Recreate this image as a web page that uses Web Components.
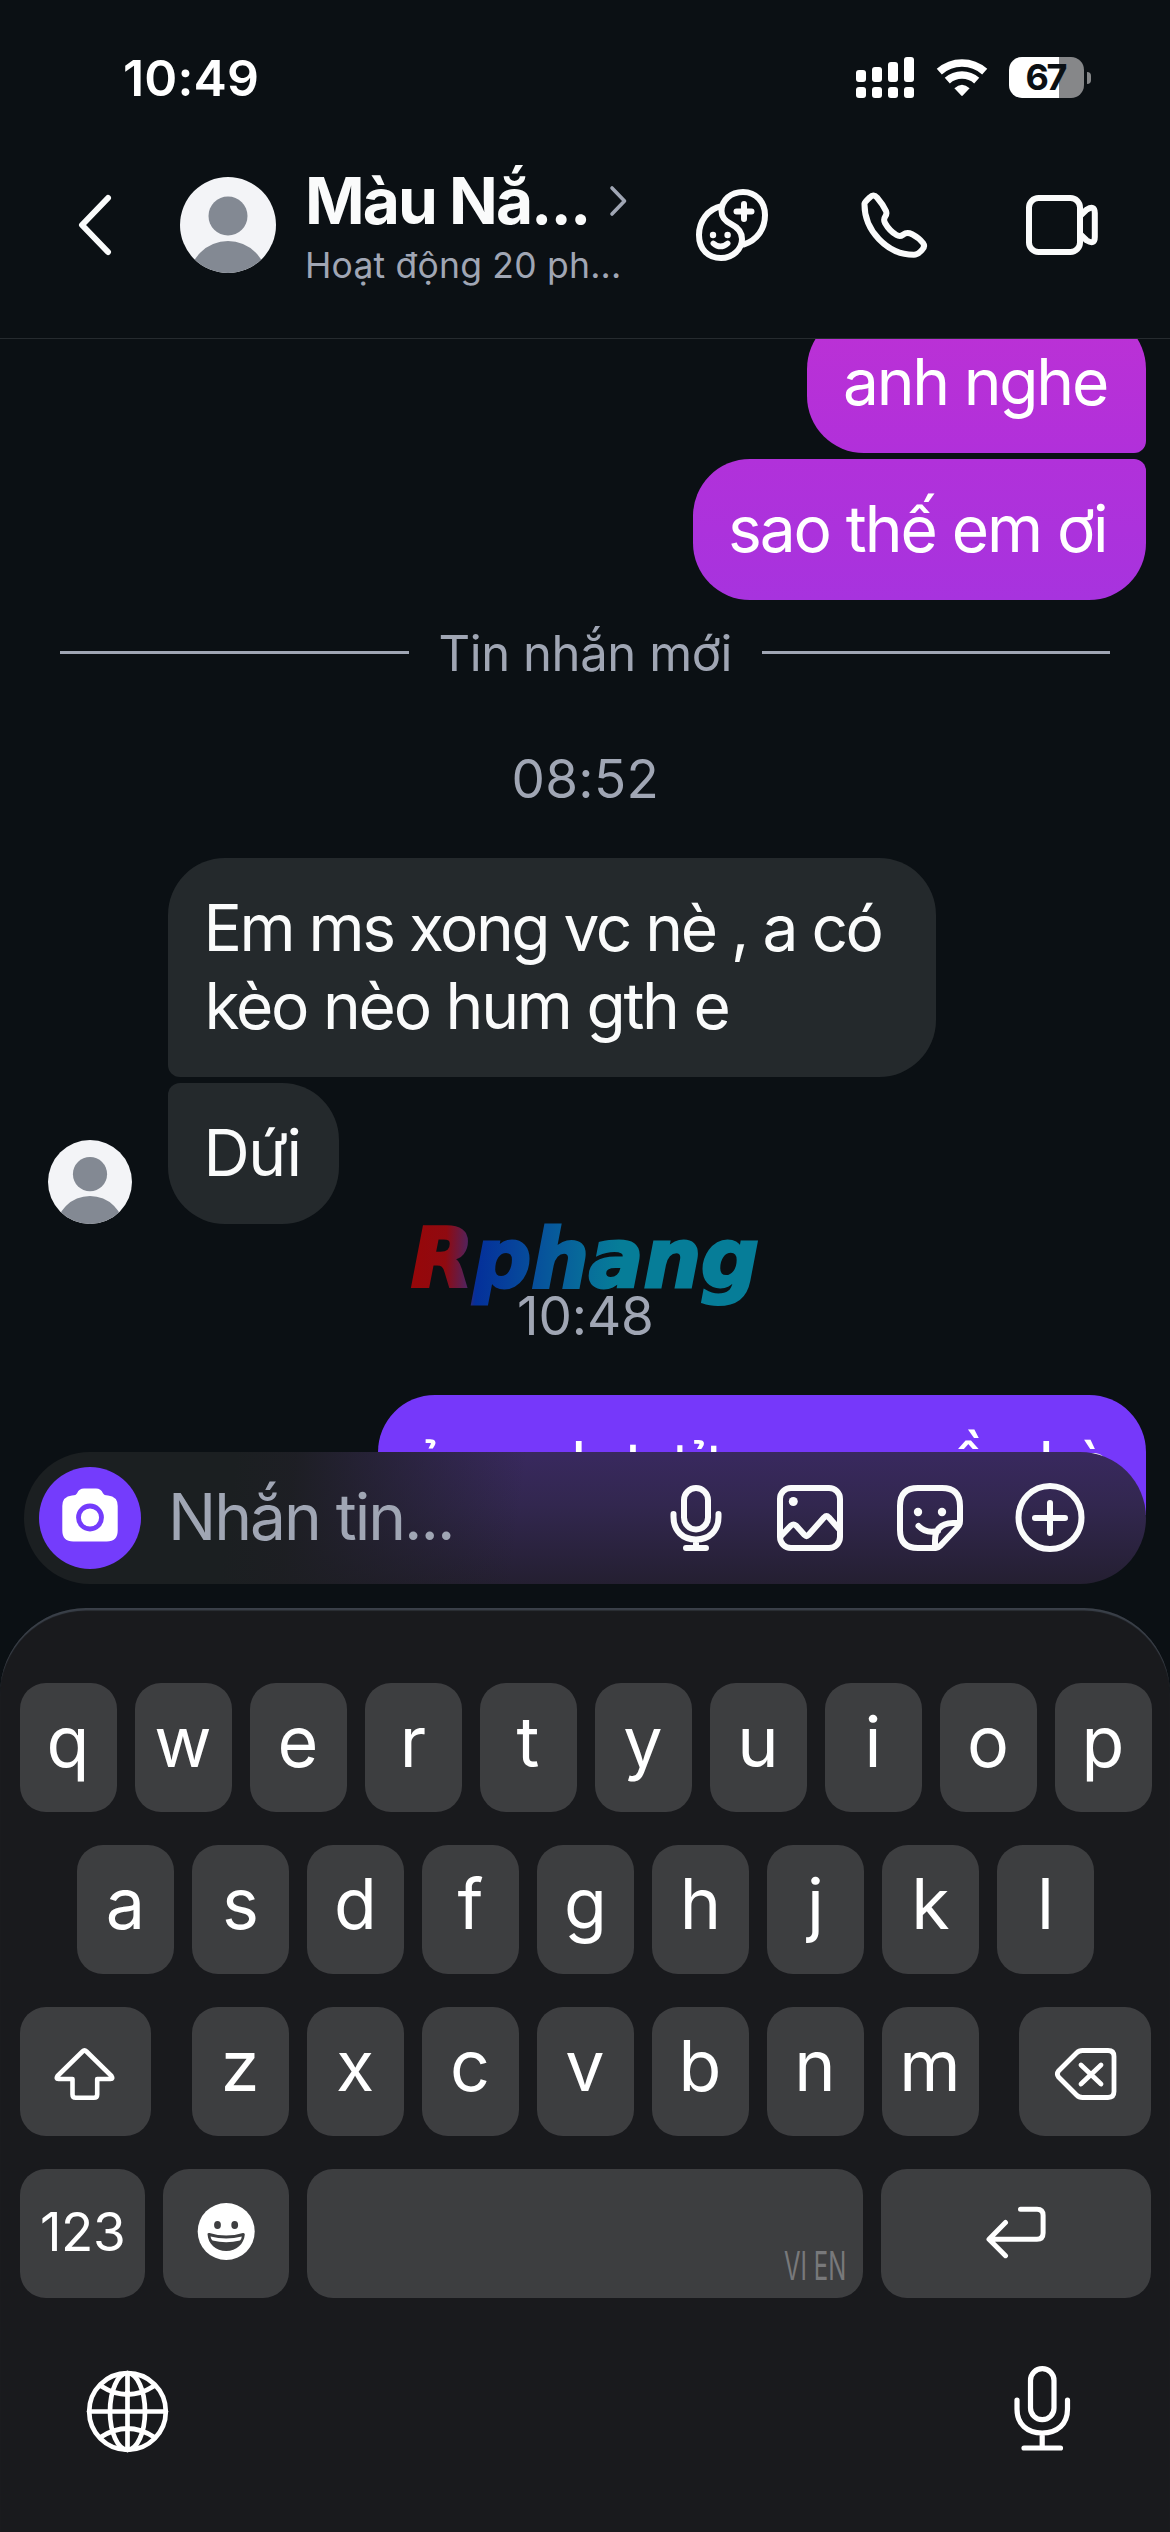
<!DOCTYPE html>
<html lang="vi">
<head>
<meta charset="utf-8">
<title>Màu Nắng</title>
<style>
html,body{margin:0;background:#0b1014}
body{font-family:Inter,"Noto Sans",sans-serif;color:#fafbfb}
</style>
</head>
<body>
<chat-app></chat-app>
<script>
const ICONS = {
  signal: ['856 57 58 41', '<g fill="#fff"><rect x="856" y="70" width="10" height="12" rx="3"/><rect x="872" y="67" width="10" height="15" rx="3"/><rect x="888" y="62" width="10" height="20" rx="3"/><rect x="904" y="57" width="10" height="25" rx="3"/><rect x="856" y="87" width="10" height="11" rx="3"/><rect x="872" y="87" width="10" height="11" rx="3"/><rect x="888" y="87" width="10" height="11" rx="3"/><rect x="904" y="87" width="10" height="11" rx="3"/></g>'],
  wifi: ['936 57 52 41', '<g fill="none" stroke="#fff" stroke-width="7.6"><path d="M939.3 71.7A34 34 0 0 1 984.7 71.7"/><path d="M947.3 80.7A22 22 0 0 1 976.7 80.7"/></g><path d="M954.4 88.3Q962 81 969.6 88.3L962.8 95.6Q962 96.4 961.2 95.6Z" fill="#fff"/>'],
  back: ['70 190 50 70', '<path d="M108 198L82 225L108 252" stroke-width="6"/>'],
  more: ['606 182 26 38', '<path d="M612 188L624.500 201L612 214" stroke="#a0a6b4" stroke-width="3.6"/>'],
  avatar: ['180 177 96 96', '<defs><clipPath id="c"><circle cx="228" cy="225" r="48"/></clipPath></defs><g clip-path="url(#c)" stroke="none"><rect x="180" y="177" width="96" height="96" fill="#f3f4f7"/><circle cx="228" cy="216" r="19.500" fill="#838993"/><circle cx="228" cy="280" r="39" fill="#838993"/></g>'],
  theme: ['696 189 72 72', '<path d="M722 206C707 209 699 222 699 235C699 249 708 258 721 258C733 258 742 249 742 239C742 232 738 227.500 731 224C725 221 721.500 217 721.500 211C721.500 200 731 192 743 192C756 192 765 202 765 215C765 229 757 240.500 743.500 244.500M744 204V219M736.500 211.500H751.500" stroke-width="6"/><path d="M713.300 243.300Q720.500 249.500 727.700 243.300" stroke-width="5.500"/><circle cx="713" cy="235" r="3.200" class="f"/><circle cx="727.600" cy="235" r="3.200" class="f"/>'],
  phone: ['858 189 72 72', '<path d="M864.500 203.500Q864.800 202 870 197.200Q873.300 193.500 877 197.500Q883 204.500 886 211Q887.200 214 885 217Q883.300 219.500 885 223Q889.500 231 896.500 235Q899.800 237 903 234.700Q907 231.700 912 234.200Q919 238 923 243Q925.500 246.500 922 250Q917.500 254.800 914 254.800C887 255 864 230 864.500 203.500Z" stroke-width="6"/>'],
  video: ['1026 189 72 72', '<rect x="1029" y="198" width="51" height="54" rx="9.500" stroke-width="6"/><path d="M1081 215L1086.500 209.800Q1094.800 204.500 1094.800 213V237Q1094.800 245.500 1086.500 240.200L1081 235" stroke-width="6"/>'],
  camera: ['39 1467 102 102', '<path class="f" stroke="none" d="M72 1495.500Q76 1495.500 77.200 1493Q79 1488.500 84 1488.500H96Q101 1488.500 102.800 1493Q104 1495.500 108 1495.500Q117.700 1496.500 117.700 1506V1530.500Q117.700 1541.500 106.700 1541.500H73.300Q62.300 1541.500 62.300 1530.500V1506Q62.300 1496.500 72 1495.500Z"/><circle cx="90" cy="1517.500" r="11.500" stroke="#743cfc" stroke-width="4.800"/>'],
  mic: ['660 1482 72 72', '<g stroke-width="6"><rect x="684" y="1488" width="24" height="41.500" rx="12"/><path d="M673.500 1514V1517C673.500 1531 683 1539.500 696 1539.500S718.500 1531 718.500 1517V1514M696 1540V1547M686 1548H706"/></g>'],
  image: ['774 1482 72 72', '<g stroke-width="6"><rect x="780" y="1488" width="60" height="60" rx="11"/><path d="M781 1536L791 1525.500Q793.500 1523.500 796 1525.500L804.500 1535Q806.500 1537 808.500 1535L824 1517.500Q826.500 1515 829 1517.500L839 1529"/></g><circle cx="793.300" cy="1501.500" r="4.500" class="f"/>'],
  sticker: ['894 1482 72 72', '<g stroke-width="6"><path d="M936 1548H918Q900 1548 900 1530V1506Q900 1488 918 1488H942Q960 1488 960 1506V1521Q960 1525 957 1528L940 1546Q938 1548 936 1548ZM958 1523H953Q935 1523.500 935 1541V1547M918.500 1526Q926 1534 938 1531"/></g><circle cx="918" cy="1512" r="4.200" class="f"/><circle cx="942" cy="1512" r="4.200" class="f"/>'],
  plus: ['1014 1482 72 72', '<g stroke-width="6"><circle cx="1050" cy="1517.500" r="31.500"/><path d="M1050 1503V1533M1035 1518H1065"/></g>'],
  shift: ['51.500 2043 68 60', '<path stroke-width="4.600" d="M82 2050.500Q84 2048.500 86 2050.500L111 2075Q113 2078 110 2078H96.700V2093.500Q96.700 2096.800 93.400 2096.800H75.300Q72 2096.800 72 2093.500V2078H58Q55 2078 57 2075Z"/>'],
  del: ['1050 2043 70 60', '<path stroke-width="4.800" d="M1082.500 2049.500H1108Q1114 2049.500 1114 2055.500V2090.500Q1114 2096.500 1108 2096.500H1082.500Q1079 2096.500 1076.500 2094L1058.500 2076Q1056.200 2073 1058.500 2070L1076.500 2052Q1079 2049.500 1082.500 2049.500ZM1081 2064L1101 2083M1101 2064L1081 2083"/>'],
  emoji: ['196.500 2202 60 60', '<circle cx="226.700" cy="2231.500" r="28.500" class="f"/><ellipse cx="218" cy="2225" rx="3.400" ry="4" fill="#3d3e40" stroke="none"/><ellipse cx="235.200" cy="2225" rx="3.400" ry="4" fill="#3d3e40" stroke="none"/><path d="M208 2234Q208 2232.800 210 2233Q226.500 2238 243.500 2233Q245.300 2232.800 245.300 2234.500C244.500 2244 237 2251 226.700 2251S208.500 2244 208 2234Z" fill="#3d3e40" stroke="none"/><path d="M211 2236.500Q226.700 2240.500 242.300 2236.500Q242 2239.500 240.500 2240.500Q226.700 2244 213 2240.500Q211.500 2239.500 211 2236.500Z" class="f"/>'],
  ret: ['983.500 2202 66 60', '<path stroke-width="5" d="M1021 2209.300H1037.500Q1043.600 2209.300 1043.600 2215.500V2233Q1043.600 2239.200 1037.500 2239.200H990M1006 2222.500L989.500 2239.200L1006 2255.700"/>'],
  globe: ['85 2369 86 86', '<g stroke-width="4.700"><circle cx="127.500" cy="2411.500" r="38.300"/><ellipse cx="127.500" cy="2411.500" rx="17.500" ry="38.300"/><path d="M127.500 2373V2450M89 2411.500H166M101 2386Q127.500 2403 154 2386M101 2437Q127.500 2420 154 2437"/></g>'],
  dictate: ['1010 2363 64 90', '<g stroke-width="5.200"><rect x="1030.500" y="2368.700" width="23.500" height="51" rx="11.700"/><path d="M1017 2400V2409C1017 2424 1027 2433 1042.200 2433S1067.500 2424 1067.500 2409V2400M1042.200 2433V2447M1024 2448H1060.500"/></g>']
};

class UiIcon extends HTMLElement {
  connectedCallback() {
    const [vb, body] = ICONS[this.getAttribute('name')];
    const [, , w, h] = vb.split(' ');
    const s = +(this.getAttribute('size') || w);
    this.attachShadow({mode: 'open'}).innerHTML =
      `<style>:host{display:block;flex:none;width:${s}px;height:${s * h / w}px}svg{display:block;width:100%;height:100%;fill:none;stroke:currentColor;stroke-linecap:round;stroke-linejoin:round}g[fill="#fff"]{stroke:none}.f{fill:currentColor;stroke:none}:host([name=wifi]) svg{stroke:none;stroke-linecap:butt}</style>
       <svg viewBox="${vb}">${body}</svg>`;
  }
}

/* One line of text, tracked so that its ink spans exactly "w" pixels. */
class FitText extends HTMLElement {
  connectedCallback() {
    const root = this.attachShadow({mode: 'open'});
    const w = +this.getAttribute('w');
    root.innerHTML = `<style>:host{display:block;flex:none;white-space:pre;width:${w}px}span{display:inline-block}</style><span><slot></slot></span>`;
    const cs = getComputedStyle(this);
    const ctx = document.createElement('canvas').getContext('2d');
    ctx.font = `${cs.fontWeight} ${cs.fontSize} ${cs.fontFamily}`;
    const text = this.textContent;
    const m = ctx.measureText(text);
    const ink = m.actualBoundingBoxLeft + m.actualBoundingBoxRight;
    const span = root.querySelector('span');
    span.style.letterSpacing = (w - ink) / ([...text].length - 1) + 'px';
    span.style.marginLeft = m.actualBoundingBoxLeft + 'px';
  }
}

const define = (name, html) => customElements.define(name, class extends HTMLElement {
  constructor() {
    super();
    const t = document.createElement('template');
    t.innerHTML = html;
    this.attachShadow({mode: 'open'}).append(t.content.cloneNode(true));
  }
});

define('status-bar', `<style>
:host{display:flex;height:155px;box-sizing:border-box;padding:0 79px 0 125px;align-items:center;color:#fff}
.time{font-size:50px;font-weight:600;line-height:60px;margin-right:auto;padding-top:1px}
.bat{position:relative;display:flex;align-items:center;justify-content:center;width:75px;height:41px;border-radius:13px;background:linear-gradient(90deg,#fff 50px,#868789 50px);color:#0b1014;font-size:36px;font-weight:700;line-height:41px;margin-left:21.5px}
.nub{width:4px;height:12px;border-radius:0 6px 6px 0;background:#868789;margin-left:3px}
ui-icon[name=wifi]{margin-left:22px}
</style>
<fit-text class="time" w="132">10:49</fit-text><ui-icon name="signal"></ui-icon><ui-icon name="wifi"></ui-icon>
<div class="bat"><fit-text w="40">67</fit-text></div><div class="nub"></div>`);

define('chat-header', `<style>
:host{display:flex;height:184px;box-sizing:border-box;border-bottom:1px solid #262b2f;align-items:flex-start;padding:0 72px 0 70px}
ui-icon[name=back]{margin-top:35px}
ui-icon[name=avatar]{margin:22px 0 0 60px}
.who{display:flex;flex-direction:column;margin-left:33px;width:387px}
.name{display:flex;gap:19px;height:80px;padding-top:6px}
.name fit-text{font-size:64px;font-weight:700;line-height:80px}
.name ui-icon{margin-top:21px}
.sub{font-size:35.500px;line-height:44px;color:#a0a6b4;margin:2.500px 0 0 -1px}
.acts{display:flex;margin-top:34px}
.acts ui-icon[name=phone]{margin:0 96px 0 90px}
</style>
<ui-icon name="back"></ui-icon><ui-icon name="avatar"></ui-icon>
<div class="who"><div class="name"><fit-text w="278">Màu Nắ...</fit-text><ui-icon name="more"></ui-icon></div>
<fit-text class="sub" w="311">Hoạt động 20 ph...</fit-text></div>
<div class="acts"><ui-icon name="theme"></ui-icon><ui-icon name="phone"></ui-icon><ui-icon name="video"></ui-icon></div>`);

define('chat-bubble', `<style>
:host{display:block;box-sizing:border-box;flex:none;width:var(--w);padding:31px 0 32px 40.500px;font-size:64px;line-height:78px;background:#24292c;border-radius:57px;color:#fafbfb}
:host([out]){padding-left:38px;color:#fff;align-self:flex-end;margin-right:24px;background:linear-gradient(var(--a),var(--b))}
:host([first]){border-bottom-left-radius:12px}
:host([last]){border-top-left-radius:12px}
:host([out][first]){border-bottom-left-radius:57px;border-bottom-right-radius:12px}
:host([out][last]){border-top-left-radius:57px;border-top-right-radius:12px}
</style><slot></slot>`);

define('new-divider', `<style>
:host{display:flex;align-items:center;gap:32px;height:59px;padding:0 60px;margin-top:23px;color:#a0a6b4;font-size:49px;line-height:57px}
i{flex:1;height:3px;background:#a0a6b4}
fit-text{padding-top:2px}
</style><i></i><fit-text w="289">Tin nhắn mới</fit-text><i></i>`);

define('time-stamp', `<style>
:host{display:flex;justify-content:center;height:64px;font-size:53px;line-height:64px;color:#a0a6b4}
</style><slot></slot>`);

define('brand-mark', `<style>
:host{position:absolute;left:395px;top:870px;width:380px;height:110px}
svg{display:block;overflow:visible}
text{font:italic 700 82px "DejaVu Sans",sans-serif}
</style><svg width="380" height="110" viewBox="395 1209 380 110"><defs>
<linearGradient id="g" gradientUnits="userSpaceOnUse" x1="411" y1="1250" x2="759" y2="1265">
<stop offset="0" stop-color="#970709"/><stop offset=".1" stop-color="#900a10"/><stop offset=".165" stop-color="#50235f"/><stop offset=".19" stop-color="#04309a"/><stop offset=".28" stop-color="#06409b"/><stop offset=".39" stop-color="#07569b"/><stop offset=".52" stop-color="#07709a"/><stop offset=".6" stop-color="#067d98"/><stop offset="1" stop-color="#067d98"/></linearGradient></defs>
<text x="411" y="1286.500" textLength="348" lengthAdjust="spacingAndGlyphs" fill="url(#g)" stroke="url(#g)" stroke-width="3">Rphang</text></svg>`);

define('chat-thread', `<style>
:host{position:relative;display:flex;flex-direction:column;height:1176px;overflow:hidden}
.in{display:flex;align-items:flex-end;margin:47px 0 60px;padding-left:48px;gap:36px}
.col{display:flex;flex-direction:column;gap:6px}
</style>
<chat-bubble out first style="--w:339px;--a:#bc31d5;--b:#b130da;margin-top:-27px"><fit-text w="262">anh nghe</fit-text></chat-bubble>
<chat-bubble out last style="--w:453px;--a:#b131da;--b:#a733de;margin-top:6px"><fit-text w="374">sao thế em ơi</fit-text></chat-bubble>
<new-divider></new-divider>
<time-stamp style="margin-top:65px"><fit-text w="141">08:52</fit-text></time-stamp>
<div class="in"><ui-icon name="avatar" size="84"></ui-icon><div class="col">
<chat-bubble first style="--w:768px"><fit-text w="673">Em ms xong vc nè , a có</fit-text><fit-text w="520">kèo nèo hum gth e</fit-text></chat-bubble>
<chat-bubble last style="--w:171px"><fit-text w="90">Dứi</fit-text></chat-bubble></div></div>
<time-stamp><fit-text w="132">10:48</fit-text></time-stamp>
<chat-bubble out style="--w:768px;--a:#7638fa;--b:#7638fa;height:219px;margin-top:47px"><fit-text w="690">ủa anh tưởng em về nhà</fit-text></chat-bubble>
<brand-mark></brand-mark>`);

define('message-composer', `<style>
:host{position:relative;z-index:1;display:flex;align-items:center;box-sizing:border-box;height:132px;margin:-63px 24px 24px;padding:0 60px 0 15px;border-radius:66px;background:linear-gradient(97deg,#1b1f21 0,#1b1f21 210px,#1c1e21f0 270px,#1d1e2400 500px),linear-gradient(#39295f,#32274f 40%,#241f31)}
.cam{width:102px;height:102px;border-radius:50%;background:#743cfc;color:#fff}
.ph{font-size:64px;line-height:78px;color:#a0a6b4;margin:-2px auto 0 32px}
.acts{display:flex}
ui-icon+ui-icon{margin-left:42px}
ui-icon[name=sticker],ui-icon[name=plus]{margin-left:48px}
</style>
<div class="cam"><ui-icon name="camera"></ui-icon></div><fit-text class="ph" w="278">Nhắn tin...</fit-text>
<div class="acts"><ui-icon name="mic"></ui-icon><ui-icon name="image"></ui-icon><ui-icon name="sticker"></ui-icon><ui-icon name="plus"></ui-icon></div>`);

define('key-cap', `<style>
:host{display:flex;flex:none;align-items:center;justify-content:center;box-sizing:border-box;width:var(--w,97px);height:129px;padding-bottom:12px;border-radius:26px;background:#3d3e40;color:#fff;font-size:70px;line-height:80px}
:host([fn]){padding-bottom:4px;font-size:53px;line-height:64px}
:host([mid]){padding-bottom:0;padding-top:4px}
:host([lang]){justify-content:flex-end;align-items:flex-end;padding:0 17px 8px 0;font-size:40px;line-height:48px;color:#78797b}
</style><slot></slot>`);

const keys = s => [...s].map(c => `<key-cap>${c}</key-cap>`).join('');
define('key-board', `<style>
:host{display:flex;flex-direction:column;box-sizing:border-box;height:924px;padding:75px 19px 0 20px;border-radius:86px 86px 0 0;background:#191a1d;box-shadow:inset 0 3px 1px -0.500px #3a4049;color:#fff}
.row{display:flex;justify-content:center;gap:18px;margin-bottom:33px}
.row.s{justify-content:space-between}
.mid{display:flex;gap:18px}
.foot{display:flex;justify-content:space-between;padding:32px 77px 0 65px}
.foot ui-icon[name=globe]{margin-top:6px}
.lang{display:block;width:62px;white-space:nowrap}
.lang span{display:inline-block;transform:scaleX(.6);transform-origin:0 50%}
</style>
<div class="row">${keys('qwertyuiop')}</div>
<div class="row">${keys('asdfghjkl')}</div>
<div class="row s"><key-cap fn mid style="--w:131px"><ui-icon name="shift"></ui-icon></key-cap><div class="mid">${keys('zxcvbnm')}</div><key-cap fn mid style="--w:132px"><ui-icon name="del"></ui-icon></key-cap></div>
<div class="row s"><key-cap fn style="--w:125px"><fit-text w="81">123</fit-text></key-cap><key-cap fn style="--w:126px"><ui-icon name="emoji"></ui-icon></key-cap><key-cap lang style="--w:556px"><div class="lang"><span>VI EN</span></div></key-cap><key-cap fn style="--w:270px"><ui-icon name="ret"></ui-icon></key-cap></div>
<div class="foot"><ui-icon name="globe"></ui-icon><ui-icon name="dictate"></ui-icon></div>`);

define('chat-app', `<style>
:host{display:flex;flex-direction:column;width:1170px;height:2532px;overflow:hidden;background:#0b1014}
</style><status-bar></status-bar><chat-header></chat-header><chat-thread></chat-thread><message-composer></message-composer><key-board></key-board>`);

customElements.define('ui-icon', UiIcon);
customElements.define('fit-text', FitText);
</script>
</body>
</html>
